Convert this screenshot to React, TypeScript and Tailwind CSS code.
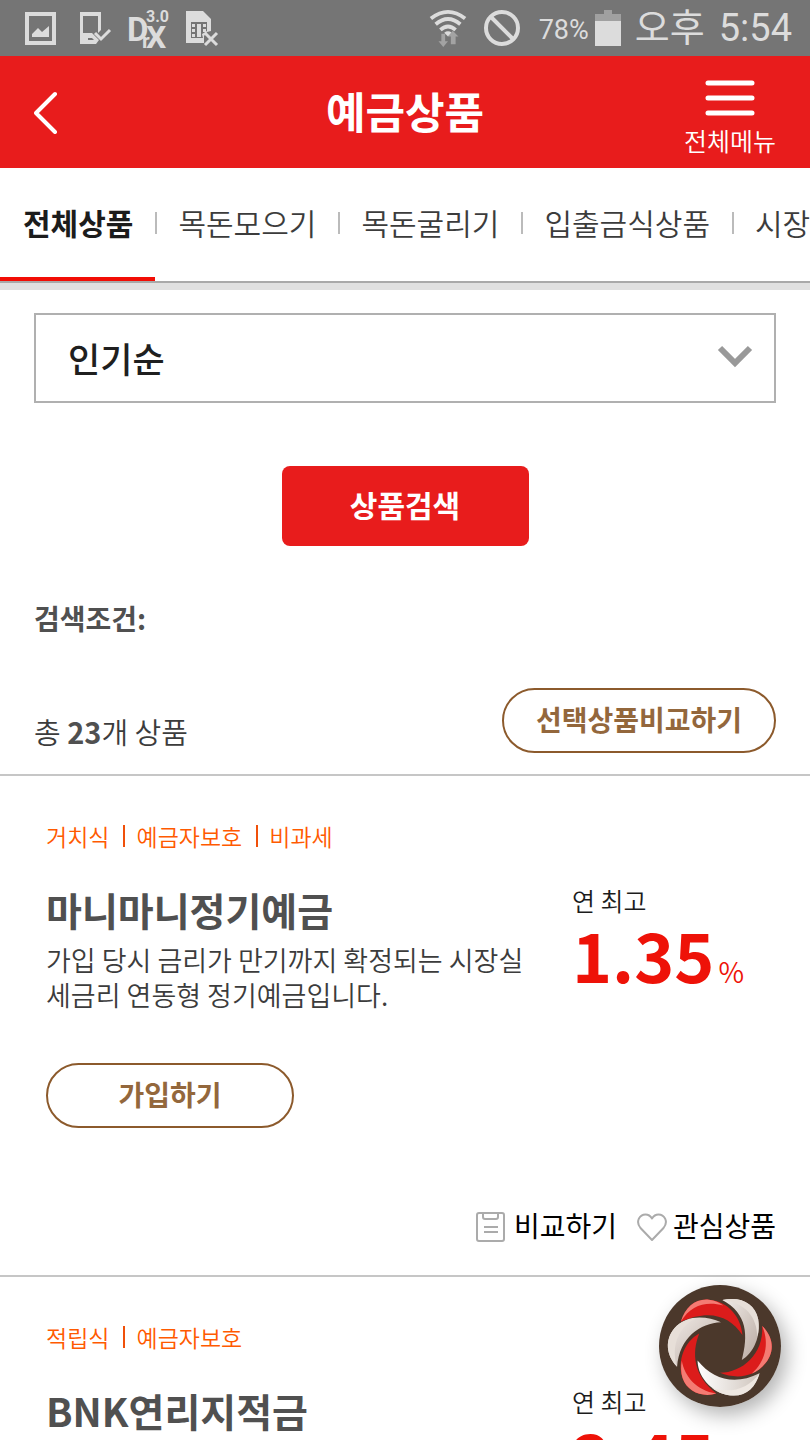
import type { ReactNode } from 'react';

type Product = {
  id: string;
  tags: string[];
  name: string;
  summary: string;
  rate: string;
};

const tabs = ['목돈모으기', '목돈굴리기', '입출금식상품', '시장성상품'];

const products: Product[] = [
  {
    id: 'manimani',
    tags: ['거치식', '예금자보호', '비과세'],
    name: '마니마니정기예금',
    summary: '가입 당시 금리가 만기까지 확정되는 시장실세금리 연동형 정기예금입니다.',
    rate: '1.35',
  },
  {
    id: 'yeonriji',
    tags: ['적립식', '예금자보호'],
    name: 'BNK연리지적금',
    summary: '',
    rate: '2.45',
  },
];

const StatusBar = () => (
  <div className="flex h-14 shrink-0 items-center justify-between bg-[#757575] pr-[18px] pl-6 font-[Roboto,'Noto_Sans_CJK_KR',sans-serif] text-[#dcdcdc]">
    <div className="flex items-center gap-4">
      <svg width="34" height="36" viewBox="0 0 34 36" fill="currentColor" aria-hidden="true">
        <path fillRule="evenodd" d="M1 2h31v33H1zM5 6v25h23V6z" />
        <path d="M8 27v-3l6-6 4 4 7-6v11z" />
      </svg>
      <svg width="34" height="36" viewBox="0 0 34 36" fill="currentColor" aria-hidden="true" className="overflow-visible">
        <path fillRule="evenodd" d="M6 2h21v18l-3 3V6H9v17h9l7 7-3 4H6zM14 28v2h6l-2-2z" />
        <path d="M21 23l6 6 9-9" fill="none" stroke="currentColor" strokeWidth="3" />
      </svg>
      <svg width="42" height="44" viewBox="0 0 42 44" fill="currentColor" aria-hidden="true" className="overflow-visible font-[Roboto,sans-serif] font-bold">
        <text x="3" y="35" fontSize="33">
          D<tspan x="18" y="42" fontSize="21">r</tspan><tspan x="22" y="42" fontSize="32">X</tspan>
        </text>
        <text x="22" y="16" fontSize="16">3.0</text>
      </svg>
      <svg width="36" height="38" viewBox="0 0 36 38" fill="currentColor" aria-hidden="true" className="overflow-visible">
        <path fillRule="evenodd" d="M4 2h17l8 8v12l-4 1-3 4v7H4zM9 13v16h12l-1-4 5-3v-9z" />
        <path d="M10 15h3v3h-3zM10 20h3v3h-3zM10 25h3v3h-3zM15 15h4v13h-4zM21 15h3v3h-3zM21 20h3v3h-3z" />
        <path d="M23 24l12 12M35 24L23 36" fill="none" stroke="currentColor" strokeWidth="3" />
      </svg>
    </div>
    <div className="flex items-center">
      <svg width="38" height="42" viewBox="0 0 40 42" fill="none" stroke="currentColor" strokeWidth="4" aria-hidden="true">
        <path d="M2 11q18-14 36 0M7 17q13-11 26 0M12 23q8-7 16 0" />
        <path d="M16 26q4-3 8 0l-4 4z" fill="currentColor" stroke="none" />
        <path d="M13 27h4v8h3l-5 6-5-6h3zM23 38h5v-8h3l-6-6-5 6h3z" fill="#a3a3a3" stroke="none" />
      </svg>
      <svg width="38" height="38" viewBox="0 0 38 38" fill="none" stroke="currentColor" strokeWidth="4" aria-hidden="true" className="ml-4">
        <circle cx="19" cy="19" r="16" />
        <path d="M8 8l22 22" />
      </svg>
      <span className="ml-[18px] pt-1 text-[27px] leading-8">78%</span>
      <svg width="26" height="36" viewBox="0 0 26 36" aria-hidden="true" className="ml-1.5">
        <path d="M9 0h8v4h9v8H0V4h9z" fill="#a0a0a0" />
        <path d="M0 11h26v25H0z" fill="currentColor" />
      </svg>
      <span className="ml-3.5 flex gap-3.5 text-[38px] leading-[52px]">
        <span>오후</span>
        <span>5:54</span>
      </span>
    </div>
  </div>
);

const Header = () => (
  <header className="grid h-28 shrink-0 grid-cols-[1fr_auto_1fr] items-center bg-[#e81c1c] px-[34px] text-white">
    <button type="button" aria-label="뒤로" className="justify-self-start">
      <svg width="24" height="44" viewBox="0 0 24 44" fill="none" stroke="currentColor" strokeWidth="4" strokeLinecap="round" strokeLinejoin="round">
        <path d="M21 4L2 23l19 19" />
      </svg>
    </button>
    <h1 className="pb-1 text-[43px] leading-[60px] font-bold">예금상품</h1>
    <button type="button" className="flex flex-col items-center gap-2 justify-self-end pt-3">
      <svg width="50" height="36" viewBox="0 0 50 36" stroke="currentColor" strokeWidth="5" strokeLinecap="round" aria-hidden="true">
        <path d="M3 3h44M3 18h44M3 33h44" />
      </svg>
      <span className="text-[25px] leading-8 font-[350]">전체메뉴</span>
    </button>
  </header>
);

const Tabs = () => (
  <nav className="shrink-0 overflow-hidden border-b-[7px] border-[#e0e0e0]">
    <div className="flex h-[115px] items-stretch border-b-2 border-[#a9a9a9] text-[30px] whitespace-nowrap">
      <a href="#all" aria-current="page" className="flex items-center border-b-4 border-[#f20d05] pr-[22px] pl-[23px] font-bold text-[#1c1c1c]">
        전체상품
      </a>
      {tabs.map((tab) => (
        <a key={tab} href={`#${tab}`} className="flex items-center border-b-4 border-transparent pr-[22px] font-[350] text-[#3c3c3c]">
          <span className="mr-[21px] h-[22px] w-0.5 bg-[#bbb]" />
          {tab}
        </a>
      ))}
    </div>
  </nav>
);

const OutlineButton = ({ className, children }: { className: string; children: ReactNode }) => (
  <button type="button" className={`h-[65px] rounded-full border-2 border-[#8c5a2c] pb-1 text-[28px] leading-10 font-bold text-[#93673c] ${className}`}>
    {children}
  </button>
);

const ProductCard = ({ product }: { product: Product }) => (
  <li className="flex min-h-[501px] flex-col border-t-2 border-[#c6c6c6] pt-11 pr-[34px] pb-[30px] pl-[46px]">
    <ul className="flex h-8 items-center text-[23px] text-[#ff5a00]">
      {product.tags.map((tag, i) => (
        <li key={tag} className="flex items-center font-[350]">
          {i > 0 && <span className="mr-[11px] ml-3.5 h-[22px] w-0.5 bg-[#f0500a]" />}
          {tag}
        </li>
      ))}
    </ul>
    <div className="mt-8 flex justify-between">
      <div className="w-[488px]">
        <h2 className="text-[39px] leading-[50px] font-bold text-[#505050]">{product.name}</h2>
        <p className="mt-2 min-h-[70px] text-[27px] leading-[35px] font-[350] break-all text-[#3c3c3c]">{product.summary}</p>
      </div>
      <div className="w-[204px]">
        <p className="text-[25px] leading-8 font-[350] text-[#1c1c1c]">연 최고</p>
        <p className="flex items-baseline gap-1 leading-[76px] text-[#ee1208]">
          <strong className="text-[68px] font-bold">{product.rate}</strong>
          <span className="text-[28px] font-[350]">%</span>
        </p>
      </div>
    </div>
    <OutlineButton className="mt-[51px] w-[248px]">가입하기</OutlineButton>
    <div className="mt-auto flex justify-end gap-5 text-[28px] leading-10 text-black">
      <button type="button" className="flex items-center gap-2">
        <svg width="30" height="30" viewBox="0 0 30 30" fill="none" stroke="#ababab" strokeWidth="2" className="mt-1" aria-hidden="true">
          <rect x="1" y="1" width="27" height="28" rx="2" />
          <path d="M7 1v4q0 2 2 2h11q2 0 2-2V1M8 15h14M8 20h14" />
        </svg>
        비교하기
      </button>
      <button type="button" className="flex items-center gap-1.5">
        <svg width="30" height="30" viewBox="0 0 30 30" fill="none" stroke="#ababab" strokeWidth="2" strokeLinejoin="round" className="mt-1" aria-hidden="true">
          <path d="M15 28L3.500 16C-2 9 3 2.500 8.500 2.500c3 0 5 1.500 6.500 4 1.500-2.500 3.500-4 6.500-4C27 2.500 32 9 26.500 16z" />
        </svg>
        관심상품
      </button>
    </div>
  </li>
);

const QuickMenu = () => (
  <button type="button" aria-label="퀵메뉴" className="fixed right-[29px] bottom-[33px] rounded-full shadow-[6px_8px_20px_rgba(0,0,0,0.3)]">
    <svg width="122" height="122" viewBox="58 43 364 364" aria-hidden="true">
      <defs>
        <linearGradient id="pearl" x1="0" y1="0" x2="1" y2="1">
          <stop offset="0" stopColor="#f1ece8" />
          <stop offset="1" stopColor="#b9aaa1" />
        </linearGradient>
        <linearGradient id="pearlLow" x1="0" y1="0" x2="1" y2="0">
          <stop offset="0" stopColor="#fff" />
          <stop offset="1" stopColor="#cfc5bd" />
        </linearGradient>
      </defs>
      <circle cx="240" cy="225" r="182" fill="#4b382b" />
      <path d="M123 153C137 108 168 83 207 87C265 92 302 138 307 192C270 137 211 113 123 153z" fill="#dc1c1b" />
      <path d="M123 153C137 108 168 83 207 87C225 89 238 95 250 104C200 91 153 101 123 153z" fill="#f47b73" />
      <path d="M247 88C301 76 344 97 354 145C362 197 341 244 305 267C324 195 323 129 247 88z" fill="url(#pearl)" />
      <path d="M247 88C301 76 344 97 354 145C357 165 356 181 351 197C351 142 318 96 247 88z" fill="#e7dfd8" />
      <path d="M366 165C399 198 405 240 376 276C343 320 285 324 240 305C306 303 370 251 366 165z" fill="#dc1c1b" />
      <path d="M366 165C399 198 405 240 376 276C364 292 350 301 335 307C374 272 389 220 366 165z" fill="#f47b73" />
      <path d="M358 306C347 346 320 374 279 373C224 370 174 324 173 268C219 325 285 343 358 306z" fill="url(#pearlLow)" />
      <path d="M358 306C347 346 320 374 279 373C256 372 234 364 216 350C270 368 324 353 358 306z" fill="#eee7e1" />
      <path d="M229 367C188 379 142 363 128 320C112 270 133 213 178 188C155 246 160 314 229 367z" fill="#dc1c1b" />
      <path d="M229 367C188 379 142 363 128 320C123 303 123 285 126 269C135 317 169 357 229 367z" fill="#f47b73" />
      <path d="M112 287C79 252 75 206 104 172C142 129 201 136 243 154C181 157 119 199 112 287z" fill="url(#pearl)" />
      <path d="M112 287C79 252 75 206 104 172C123 151 146 143 170 142C122 162 91 220 112 287z" fill="#e7dfd8" />
    </svg>
  </button>
);

export default function App() {
  return (
    <div className="flex h-screen flex-col overflow-hidden bg-white font-['Noto_Sans_CJK_KR',sans-serif]">
      <StatusBar />
      <Header />
      <Tabs />
      <main className="min-h-0 flex-1 overflow-y-auto [scrollbar-width:none]">
        <form className="px-[34px] pt-[23px]" onSubmit={(e) => e.preventDefault()}>
          <div className="relative">
            <select aria-label="정렬" defaultValue="popular" className="h-[90px] w-full appearance-none border-2 border-[#b0b0b0] bg-white px-8 text-[35px] font-medium text-[#1f1f1f]">
              <option value="popular">인기순</option>
              <option value="rate">금리순</option>
            </select>
            <svg width="36" height="24" viewBox="0 0 36 24" fill="none" stroke="#999" strokeWidth="6" className="pointer-events-none absolute top-8 right-[23px]" aria-hidden="true">
              <path d="M3 3l15 15L33 3" />
            </svg>
          </div>
          <button type="submit" className="mx-auto mt-[63px] block h-20 w-[247px] rounded-lg bg-[#e81c1c] pb-1 text-[30px] leading-10 font-bold text-white">
            상품검색
          </button>
        </form>
        <p className="mt-[52px] px-[34px] text-[28px] leading-10 font-bold text-[#505050]">검색조건:</p>
        <div className="mt-[50px] flex items-end justify-between px-[34px] pb-[21px]">
          <p className="pb-0.5 text-[29px] leading-10 font-[350] text-[#3c3c3c]">
            총 <strong className="font-bold text-[#505050]">23</strong>개 상품
          </p>
          <OutlineButton className="w-[274px]">선택상품비교하기</OutlineButton>
        </div>
        <ul>
          {products.map((product) => (
            <ProductCard key={product.id} product={product} />
          ))}
        </ul>
      </main>
      <QuickMenu />
    </div>
  );
}
